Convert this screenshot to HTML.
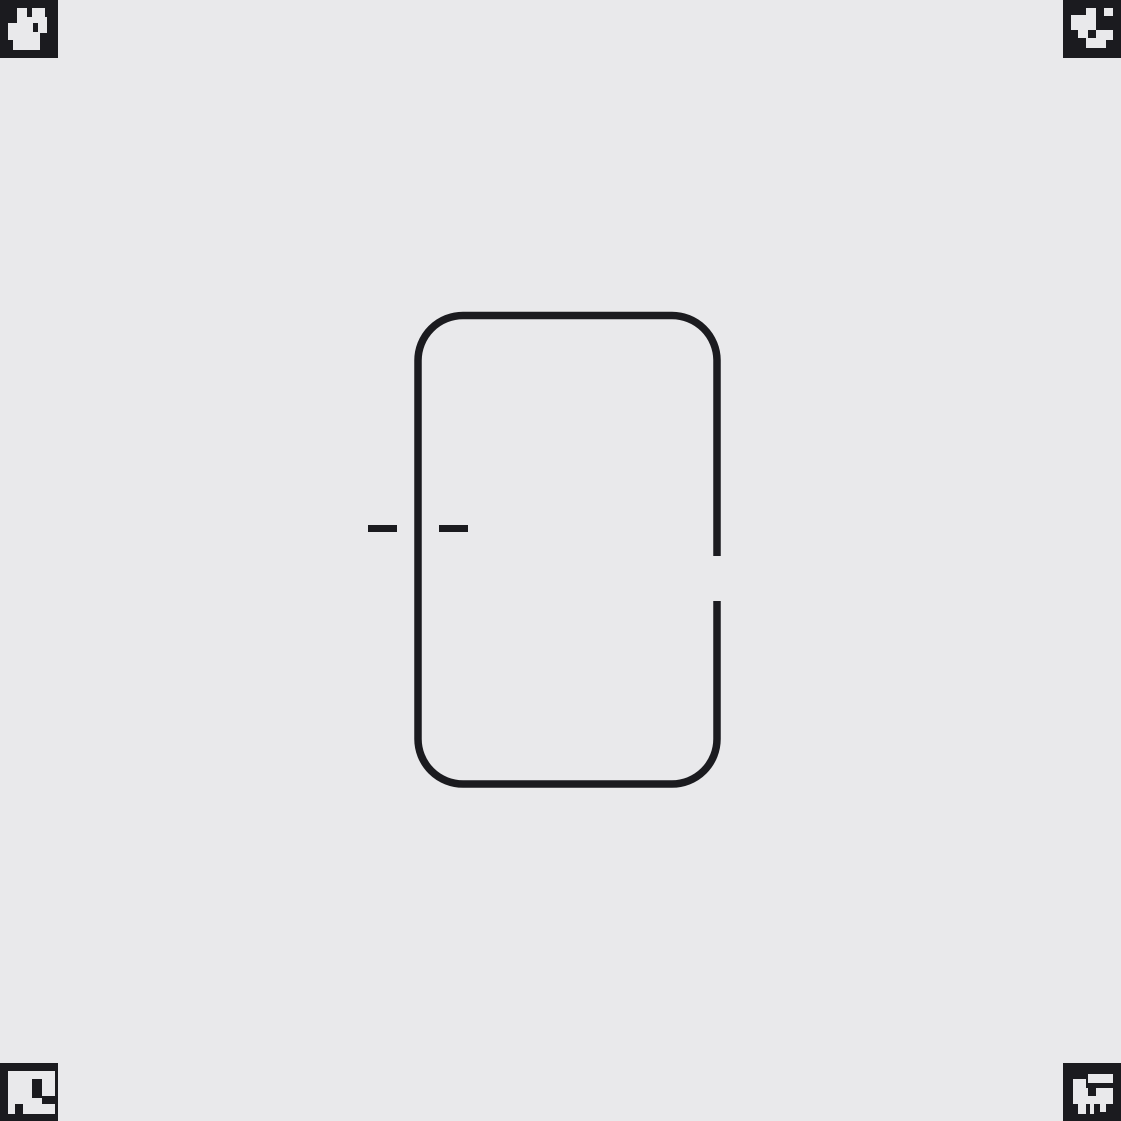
<!DOCTYPE html>
<html><head><meta charset="utf-8"><style>
html,body{margin:0;padding:0;background:#e9e9eb;}
body{width:1121px;height:1121px;position:relative;overflow:hidden;}
svg{position:absolute;left:0;top:0}
</style></head><body>
<svg width="1121" height="1121" viewBox="0 0 1121 1121">
<rect width="1121" height="1121" fill="#e9e9eb"/>
<g fill="none" stroke="#1b1b1f" stroke-width="7.5">
<path d="M717 556 V360 A45 45 0 0 0 672 315.5 H463 A45 45 0 0 0 418 360.5 V739 A45 45 0 0 0 463 784 H672 A45 45 0 0 0 717 739 V601"/>
</g>
<rect x="368" y="525" width="29" height="7" fill="#1b1b1f"/>
<rect x="439" y="525" width="29" height="7" fill="#1b1b1f"/>
<g fill="#1b1b1f">
<rect x="0" y="0" width="58" height="58"/>
<rect x="1063" y="0" width="58" height="58"/>
<rect x="0" y="1063" width="58" height="58"/>
<rect x="1063" y="1063" width="58" height="58"/>
</g>
<g fill="#e9e9eb">
<!-- TL -->
<rect x="17" y="8" width="10" height="10"/><rect x="32" y="8" width="13" height="10"/>
<rect x="17" y="17" width="30" height="16"/>
<rect x="8" y="23" width="10" height="17"/>
<rect x="13" y="33" width="27" height="17"/>
<!-- TR -->
<rect x="1086" y="8" width="10" height="8"/>
<rect x="1071" y="15" width="25" height="15"/>
<rect x="1104" y="8" width="9" height="8"/>
<rect x="1078" y="30" width="10" height="8"/>
<rect x="1096" y="30" width="17" height="10"/>
<rect x="1086" y="38" width="20" height="10"/>
<!-- BL -->
<rect x="8" y="1071" width="47" height="43"/>
<!-- BR -->
<rect x="1088" y="1074" width="25" height="9"/>
<rect x="1073" y="1079" width="13" height="25"/>
<rect x="1086" y="1088" width="27" height="16"/>
<rect x="1078" y="1104" width="8" height="10"/>
<rect x="1090" y="1104" width="4" height="10"/>
<rect x="1100" y="1104" width="6" height="8"/>
</g>
<g fill="#1b1b1f">
<rect x="33" y="23" width="5" height="9"/>
<rect x="32" y="1079" width="10" height="19"/>
<rect x="42" y="1096" width="13" height="8"/>
<rect x="15" y="1104" width="8" height="10"/>
<rect x="1088" y="1088" width="8" height="8"/>
</g>
</svg>
</body></html>
